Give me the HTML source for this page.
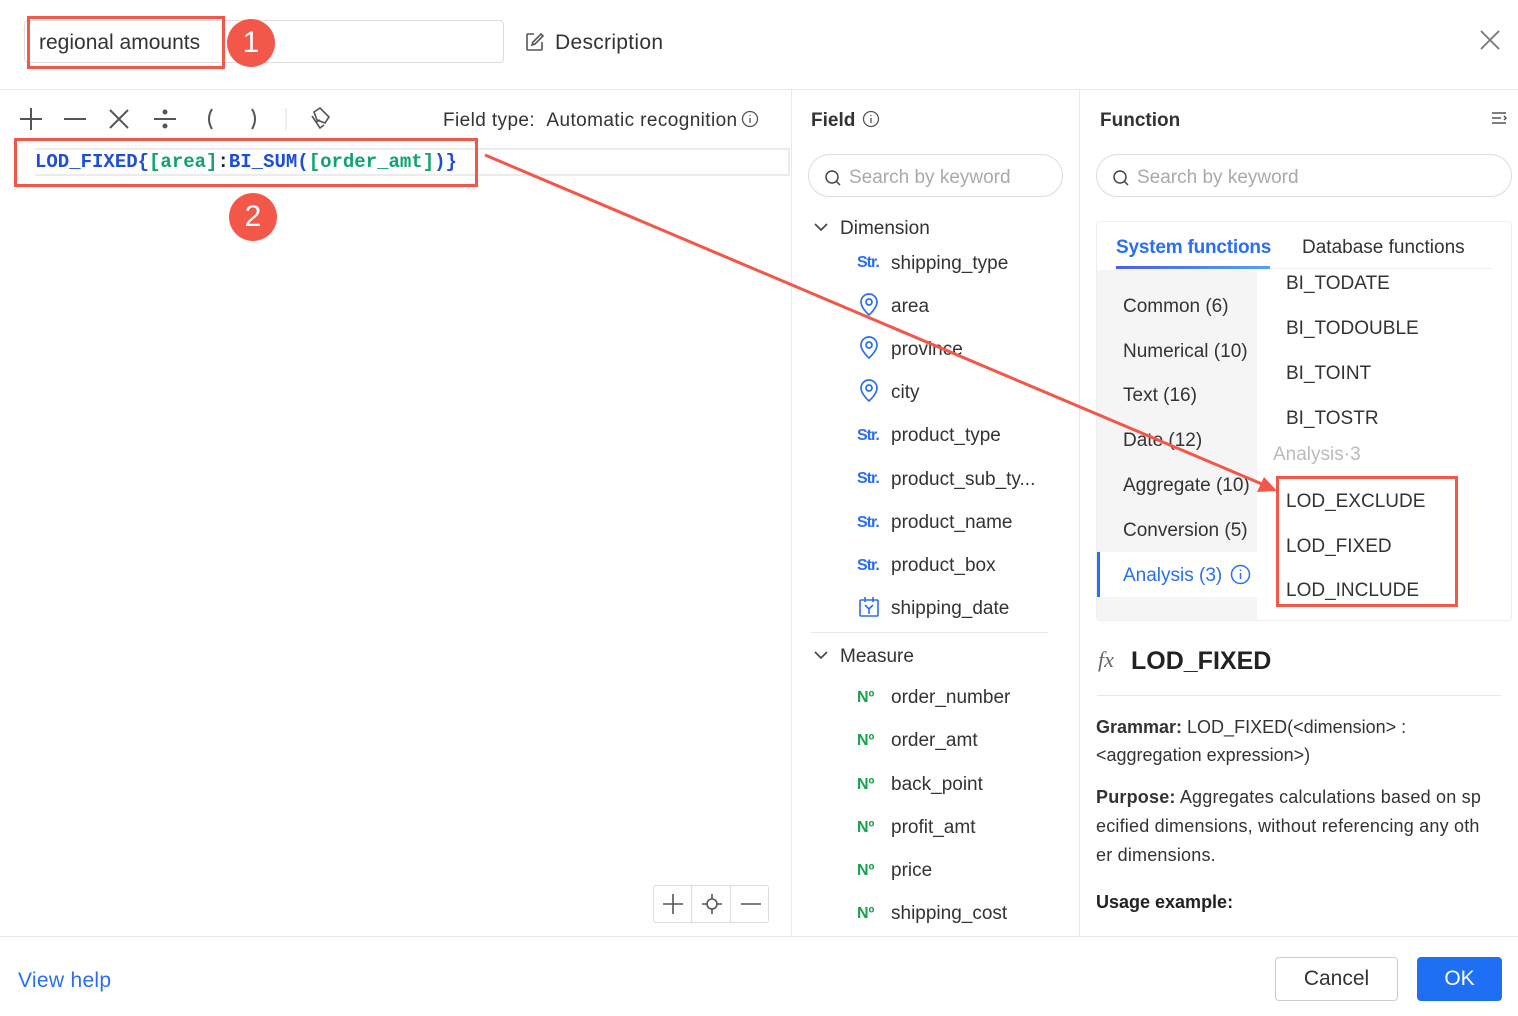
<!DOCTYPE html>
<html><head><meta charset="utf-8"><style>
*{box-sizing:border-box;margin:0;padding:0}
body{width:1518px;height:1016px;position:relative;background:#fff;font-family:"Liberation Sans",Arial,sans-serif;color:#333;overflow:hidden}
.a{position:absolute;white-space:nowrap}
.t{font-size:19px;color:#333}
.fi{font-size:19px;color:#333;left:891px}
.str{left:857px;font-size:16px;color:#2a6ef5;font-weight:bold;letter-spacing:-1px}
.no{left:857px;font-size:16px;color:#16a34a;font-weight:bold}
.cat{left:1123px;font-size:19px;color:#333}
.fn{left:1286px;font-size:19px;color:#333}
.badge{position:absolute;width:48px;height:48px;border-radius:50%;background:#f3574a;color:#fff;font-size:30px;text-align:center;line-height:48px}
</style></head><body>
<div class="a" style="left:24px;top:20px;width:480px;height:43px;border:1px solid #ddd;border-radius:4px"></div>
<div class="a" style="left:27px;top:16px;width:198px;height:53px;border:3px solid #f3574a"></div>
<div class="a t" style="left:39px;top:31px;font-size:21px">regional amounts</div>
<div class="badge" style="left:227px;top:19px">1</div>
<svg class="a" style="left:524px;top:31px" width="22" height="22" viewBox="0 0 22 22" fill="none" stroke="#555" stroke-width="1.6"><path d="M10 3H4a1 1 0 0 0-1 1v14a1 1 0 0 0 1 1h13a1 1 0 0 0 1-1v-7"/><path d="M17 3l2 2-8 8-3 1 1-3z"/></svg>
<div class="a t" style="left:555px;top:31px;font-size:21px;letter-spacing:0.3px">Description</div>
<svg class="a" style="left:1479px;top:29px" width="22" height="22" viewBox="0 0 22 22" stroke="#777" stroke-width="1.8"><path d="M2 2l18 18M20 2L2 20"/></svg>
<div class="a" style="left:0;top:89px;width:1518px;height:1px;background:#e8e8e8"></div>
<div class="a" style="left:0;top:90px;width:791px;height:846px;background:#fefefe"></div>
<svg class="a" style="left:18px;top:106px" width="320" height="26" viewBox="0 0 320 26" fill="none" stroke="#555" stroke-width="2"><path d="M2 13h22M13 2v22M46 13h22M92 4l18 18M110 4L92 22M136 13h22"/><circle cx="147" cy="6" r="1.5" fill="#555"/><circle cx="147" cy="20" r="1.5" fill="#555"/><path d="M194 3q-6 10 0 20M234 3q6 10 0 20" stroke-width="2"/><path d="M268 2v22" stroke="#ddd" stroke-width="1"/><path d="M296 6l6-4 9 9-4 6-8-3zM294 10l8 12 4-3M298 16l4-2" stroke-width="1.6"/></svg>
<div class="a t" style="left:443px;top:110px;letter-spacing:0.4px">Field type:&nbsp;&nbsp;Automatic recognition</div>
<svg class="a" style="left:741px;top:110px" width="18" height="18" viewBox="0 0 18 18" fill="none" stroke="#555" stroke-width="1.3"><circle cx="9" cy="9" r="7.5"/><path d="M9 8v5M9 5v1"/></svg>
<div class="a" style="left:35px;top:148px;width:755px;height:28px;border:2px solid #ececec;border-left:none"></div>
<div class="a" style="left:35px;top:151px;font-family:'Liberation Mono',monospace;font-size:19px;font-weight:bold;color:#1d4ed8">LOD_FIXED{<span style="color:#10a36b">[area]</span><span style="color:#222">:</span>BI_SUM(<span style="color:#10a36b">[order_amt]</span>)}</div>
<div class="a" style="left:14px;top:138px;width:464px;height:49px;border:3px solid #f3574a"></div>
<div class="badge" style="left:229px;top:193px">2</div>
<div class="a" style="left:653px;top:885px;width:116px;height:38px;border:1px solid #ddd;border-radius:3px"></div>
<div class="a" style="left:691px;top:885px;width:1px;height:38px;background:#ddd"></div>
<div class="a" style="left:730px;top:885px;width:1px;height:38px;background:#ddd"></div>
<svg class="a" style="left:660px;top:892px" width="104" height="24" viewBox="0 0 104 24" fill="none" stroke="#555" stroke-width="1.6"><path d="M3 12h20M13 2v20M42 12h20M52 2v20"/><circle cx="52" cy="12" r="5" fill="#fff"/><path d="M81 12h20"/></svg>
<div class="a" style="left:791px;top:90px;width:1px;height:846px;background:#e8e8e8"></div>
<div class="a" style="left:1079px;top:90px;width:1px;height:846px;background:#e8e8e8"></div>
<div class="a t" style="left:811px;top:110px;font-weight:bold">Field</div>
<svg class="a" style="left:862px;top:110px" width="18" height="18" viewBox="0 0 18 18" fill="none" stroke="#555" stroke-width="1.3"><circle cx="9" cy="9" r="7.5"/><path d="M9 8v5M9 5v1"/></svg>
<div class="a" style="left:808px;top:154px;width:255px;height:43px;border:1px solid #ddd;border-radius:22px"></div>
<svg class="a" style="left:824px;top:169px" width="18" height="18" viewBox="0 0 18 18" fill="none" stroke="#444" stroke-width="1.5"><circle cx="8" cy="8" r="6"/><path d="M12.5 12.5l3.5 3.5"/></svg>
<div class="a" style="left:849px;top:167px;font-size:19px;color:#aaa">Search by keyword</div>
<svg class="a" style="left:813px;top:220px" width="16" height="14" viewBox="0 0 16 14" fill="none" stroke="#444" stroke-width="1.6"><path d="M2 4l6 6 6-6"/></svg>
<div class="a t" style="left:840px;top:218px">Dimension</div>
<div class="a str" style="top:254px">Str.</div><div class="a fi" style="top:253px">shipping_type</div>
<svg class="a" style="left:859px;top:293px" width="20" height="24" viewBox="0 0 20 24" fill="none" stroke="#2a6ef5" stroke-width="1.7"><path d="M10 22s-8-7-8-13a8 8 0 0 1 16 0c0 6-8 13-8 13z"/><circle cx="10" cy="9" r="3"/></svg>
<div class="a fi" style="top:296px">area</div>
<svg class="a" style="left:859px;top:336px" width="20" height="24" viewBox="0 0 20 24" fill="none" stroke="#2a6ef5" stroke-width="1.7"><path d="M10 22s-8-7-8-13a8 8 0 0 1 16 0c0 6-8 13-8 13z"/><circle cx="10" cy="9" r="3"/></svg>
<div class="a fi" style="top:339px">province</div>
<svg class="a" style="left:859px;top:379px" width="20" height="24" viewBox="0 0 20 24" fill="none" stroke="#2a6ef5" stroke-width="1.7"><path d="M10 22s-8-7-8-13a8 8 0 0 1 16 0c0 6-8 13-8 13z"/><circle cx="10" cy="9" r="3"/></svg>
<div class="a fi" style="top:382px">city</div>
<div class="a str" style="top:427px">Str.</div><div class="a fi" style="top:425px">product_type</div>
<div class="a str" style="top:470px">Str.</div><div class="a fi" style="top:469px">product_sub_ty...</div>
<div class="a str" style="top:514px">Str.</div><div class="a fi" style="top:512px">product_name</div>
<div class="a str" style="top:557px">Str.</div><div class="a fi" style="top:555px">product_box</div>
<svg class="a" style="left:858px;top:596px" width="22" height="22" viewBox="0 0 22 22" fill="none" stroke="#2a6ef5" stroke-width="1.6"><rect x="2" y="4" width="18" height="16" rx="1"/><path d="M7 1v5M15 1v5M7 9l4 4 4-4M11 13v5"/></svg>
<div class="a fi" style="top:598px">shipping_date</div>
<div class="a" style="left:811px;top:632px;width:237px;height:1px;background:#e8e8e8"></div>
<svg class="a" style="left:813px;top:648px" width="16" height="14" viewBox="0 0 16 14" fill="none" stroke="#444" stroke-width="1.6"><path d="M2 4l6 6 6-6"/></svg>
<div class="a t" style="left:840px;top:646px">Measure</div>
<div class="a no" style="top:689px">N&#186;</div><div class="a fi" style="top:687px">order_number</div>
<div class="a no" style="top:732px">N&#186;</div><div class="a fi" style="top:730px">order_amt</div>
<div class="a no" style="top:776px">N&#186;</div><div class="a fi" style="top:774px">back_point</div>
<div class="a no" style="top:819px">N&#186;</div><div class="a fi" style="top:817px">profit_amt</div>
<div class="a no" style="top:862px">N&#186;</div><div class="a fi" style="top:860px">price</div>
<div class="a no" style="top:905px">N&#186;</div><div class="a fi" style="top:903px">shipping_cost</div>
<div class="a t" style="left:1100px;top:110px;font-weight:bold">Function</div>
<svg class="a" style="left:1490px;top:110px" width="18" height="18" viewBox="0 0 18 18" fill="none" stroke="#555" stroke-width="1.5"><path d="M2 3h14M2 8h9M2 13h14M14 6l2 2-2 2"/></svg>
<div class="a" style="left:1096px;top:154px;width:416px;height:43px;border:1px solid #ddd;border-radius:22px"></div>
<svg class="a" style="left:1112px;top:169px" width="18" height="18" viewBox="0 0 18 18" fill="none" stroke="#444" stroke-width="1.5"><circle cx="8" cy="8" r="6"/><path d="M12.5 12.5l3.5 3.5"/></svg>
<div class="a" style="left:1137px;top:167px;font-size:19px;color:#aaa">Search by keyword</div>
<div class="a" style="left:1096px;top:221px;width:416px;height:400px;border:1px solid #eee;border-radius:4px"></div>
<div class="a" style="left:1116px;top:237px;font-size:19px;color:#2a6ef5;font-weight:bold;letter-spacing:-0.2px">System functions</div>
<div class="a t" style="left:1302px;top:237px">Database functions</div>
<div class="a" style="left:1116px;top:268px;width:376px;height:1px;background:#eee"></div>
<div class="a" style="left:1116px;top:266px;width:154px;height:3px;background:linear-gradient(90deg,#4d5cf0,#4fa2f7)"></div>
<div class="a" style="left:1097px;top:270px;width:160px;height:350px;background:#f5f5f5"></div>
<div class="a" style="left:1097px;top:552px;width:160px;height:45px;background:#fff;border-left:3px solid #2a6ef5"></div>
<div class="a cat" style="top:296px">Common (6)</div>
<div class="a cat" style="top:341px">Numerical (10)</div>
<div class="a cat" style="top:385px">Text (16)</div>
<div class="a cat" style="top:430px">Date (12)</div>
<div class="a cat" style="top:475px">Aggregate (10)</div>
<div class="a cat" style="top:520px">Conversion (5)</div>
<div class="a cat" style="top:565px;color:#2a6ef5">Analysis (3)</div>
<svg class="a" style="left:1230px;top:564px" width="21" height="21" viewBox="0 0 21 21" fill="none" stroke="#2a6ef5" stroke-width="1.5"><circle cx="10.5" cy="10.5" r="9"/><path d="M10.5 9v6M10.5 5.5v1.5"/></svg>
<div class="a fn" style="top:273px">BI_TODATE</div>
<div class="a fn" style="top:318px">BI_TODOUBLE</div>
<div class="a fn" style="top:363px">BI_TOINT</div>
<div class="a fn" style="top:408px">BI_TOSTR</div>
<div class="a" style="left:1273px;top:444px;font-size:19px;color:#bbb">Analysis·3</div>
<div class="a fn" style="top:491px">LOD_EXCLUDE</div>
<div class="a fn" style="top:536px">LOD_FIXED</div>
<div class="a fn" style="top:580px">LOD_INCLUDE</div>
<div class="a" style="left:1276px;top:476px;width:182px;height:131px;border:3px solid #f3574a"></div>
<div class="a" style="left:1098px;top:647px;font-family:'Liberation Serif',serif;font-style:italic;font-size:22px;color:#666">fx</div>
<div class="a" style="left:1131px;top:647px;font-size:25px;font-weight:bold;color:#222">LOD_FIXED</div>
<div class="a" style="left:1097px;top:695px;width:404px;height:1px;background:#e8e8e8"></div>
<div class="a" style="left:1096px;top:713px;width:420px;font-size:18px;line-height:28px;color:#333;white-space:normal"><b>Grammar:</b> LOD_FIXED(&lt;dimension&gt; :<br>&lt;aggregation expression&gt;)</div>
<div class="a" style="left:1096px;top:783px;width:420px;font-size:18px;line-height:29px;color:#333;white-space:normal;letter-spacing:0.2px"><b>Purpose:</b> Aggregates calculations based on sp<br>ecified dimensions, without referencing any oth<br>er dimensions.</div>
<div class="a" style="left:1096px;top:892px;font-size:18px;font-weight:bold;color:#222">Usage example:</div>
<div class="a" style="left:0;top:936px;width:1518px;height:1px;background:#e8e8e8"></div>
<div class="a" style="left:18px;top:969px;font-size:21px;color:#2a6ef5;letter-spacing:0.3px">View help</div>
<div class="a" style="left:1275px;top:957px;width:123px;height:44px;border:1px solid #ccc;border-radius:4px;text-align:center;line-height:42px;font-size:21px;color:#333">Cancel</div>
<div class="a" style="left:1417px;top:957px;width:85px;height:44px;background:#1f6ff5;border-radius:4px;text-align:center;line-height:44px;font-size:21px;color:#fff">OK</div>
<svg class="a" style="left:0;top:0" width="1518" height="1016"><path d="M485 155L1262 484" stroke="#f3574a" stroke-width="3"/><path d="M1277 491l-20 1 7-15z" fill="#f3574a"/></svg>
</body></html>
